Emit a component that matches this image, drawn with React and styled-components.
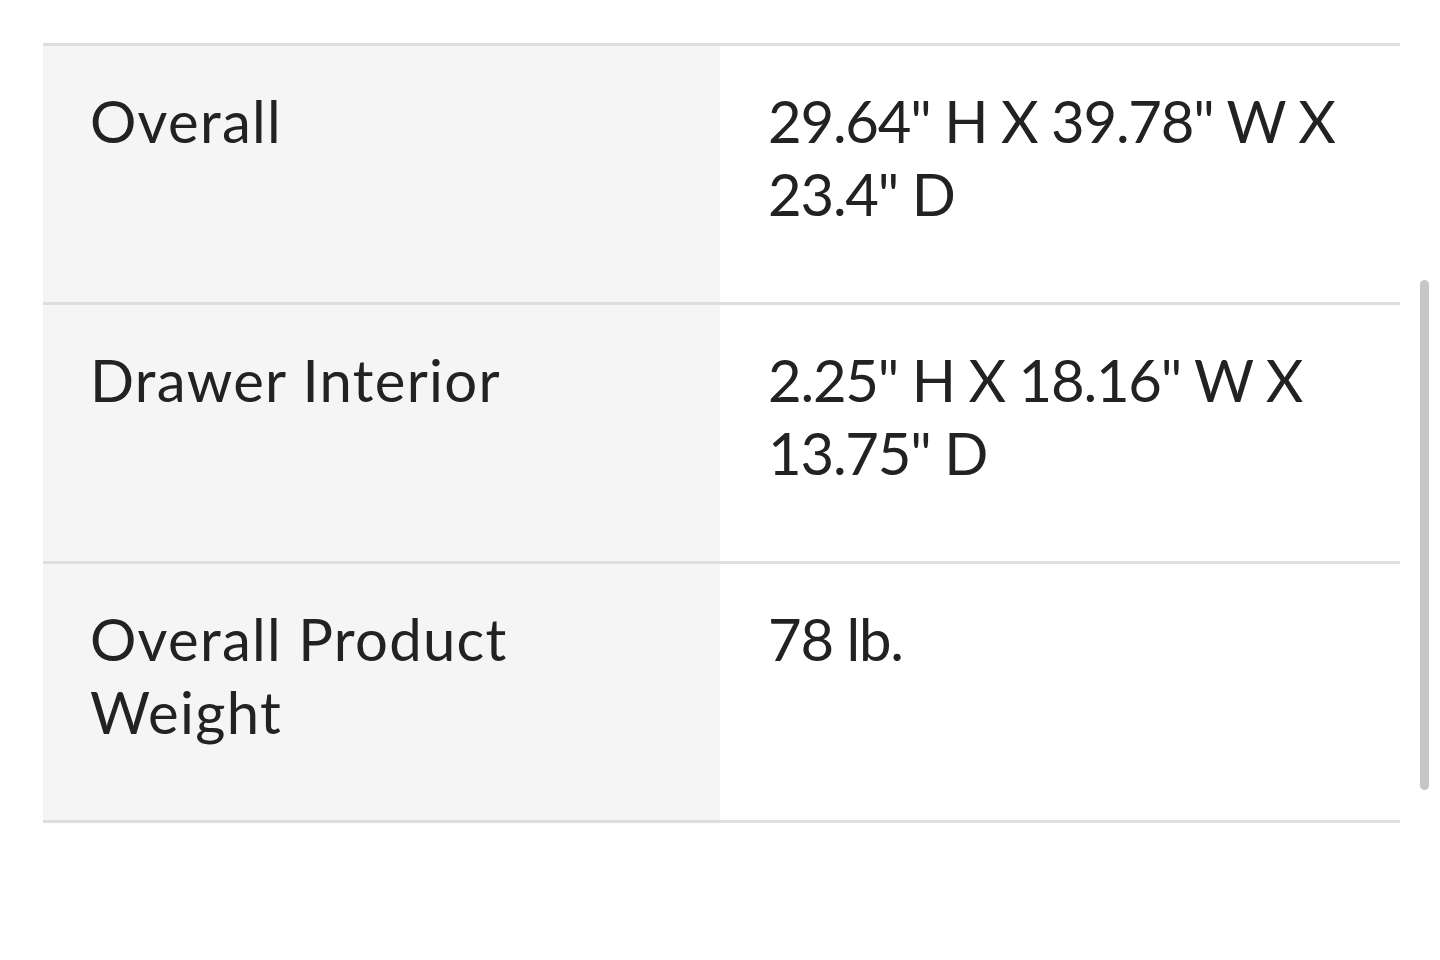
import React from "react";
import styled, { createGlobalStyle } from "styled-components";

const Global = createGlobalStyle`
  html, body { margin: 0; padding: 0; background: #ffffff; }
  body { font-family: Lato, "Noto Sans", sans-serif; color: #222; }
`;

const Page = styled.div`
  position: relative;
  width: 1440px;
  height: 960px;
  box-sizing: border-box;
  padding: 43px 40px 0 43px;
  overflow: hidden;
  background: #fff;
`;

const Table = styled.div`
  display: flex;
  flex-direction: column;
  border-bottom: 3px solid #dedede;
`;

const Row = styled.div`
  display: grid;
  grid-template-columns: 677px 1fr;
  border-top: 3px solid #dedede;
  height: 259px;
  box-sizing: border-box;
`;

const Cell = styled.div`
  background: ${(p) => (p.$label ? "#f5f5f5" : "#ffffff")};
  padding: ${(p) => (p.$label ? "38px 120px 0 47px" : "38px 10px 0 48px")};
  font-size: 58px;
  line-height: 73px;
  color: #222;
  letter-spacing: ${(p) => (p.$label ? "1.3px" : "-1.2px")};
`;

const Scrollbar = styled.div`
  position: absolute;
  left: 1420px;
  top: 280px;
  width: 9px;
  height: 510px;
  border-radius: 5px;
  background: #c6c6c6;
`;

const rows = [
  ["Overall", "29.64\" H X 39.78\" W X 23.4\" D"],
  ["Drawer Interior", "2.25\" H X 18.16\" W X 13.75\" D"],
  ["Overall Product Weight", "78 lb."],
];

export default function App() {
  return (
    <>
      <Global />
      <Page>
        <Table>
          {rows.map(([k, v]) => (
            <Row key={k}>
              <Cell $label>{k}</Cell>
              <Cell>{v}</Cell>
            </Row>
          ))}
        </Table>
        <Scrollbar />
      </Page>
    </>
  );
}
